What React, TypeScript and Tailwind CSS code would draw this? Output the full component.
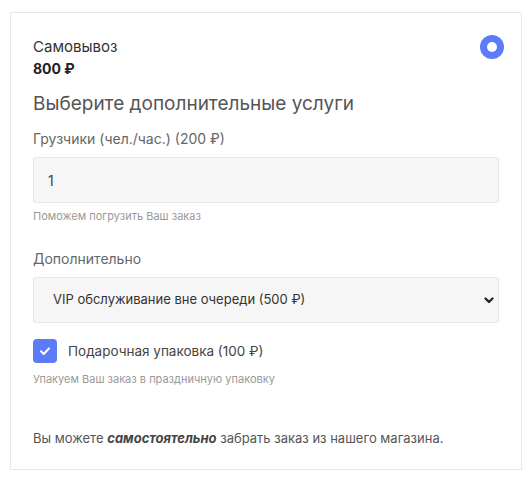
import React from "react";

const App = () => {
  return (
    <div className="min-h-screen bg-white pt-3 pl-[10px] font-['Inter',sans-serif] text-[#333]">
      <div className="w-[512px] border border-[#e8e8e8] px-[22px] pt-[24px] pb-[22px]">
        {/* Header */}
        <div className="flex justify-between items-start">
          <div>
            <div className="text-[15px] leading-[20px] text-[#333]">Самовывоз</div>
            <div className="text-[14px] leading-[20px] font-bold text-[#222] mt-[2px]">800 ₽</div>
          </div>
          <div className="w-6 h-6 rounded-full bg-[#5b7bf9] flex items-center justify-center mt-[-2px] mr-[-5px]">
            <div className="w-[10px] h-[10px] rounded-full bg-white" />
          </div>
        </div>

        <div className="text-[19px] leading-[26px] text-[#555] mt-[12px]">
          Выберите дополнительные услуги
        </div>

        {/* Loaders */}
        <div className="mt-[12px] text-[14px] leading-[20px] text-[#666]">Грузчики (чел./час.) (200 ₽)</div>
        <div className="mt-[8px] h-[46px] bg-[#f6f6f6] border border-[#e6e6e6] rounded-[2px] flex items-center px-[14px] text-[14px] text-[#444]">
          1
        </div>
        <div className="mt-[5px] text-[11px] leading-[16px] text-[#999]">Поможем погрузить Ваш заказ</div>

        {/* Additional */}
        <div className="mt-[25px] text-[14px] leading-[20px] text-[#666]">Дополнительно</div>
        <div className="mt-[8px] h-[46px] bg-[#f6f6f6] border border-[#e6e6e6] rounded-[2px] flex items-center justify-between pl-[19px] pr-[3px] text-[13px] text-[#333]">
          <span>VIP обслуживание вне очереди (500 ₽)</span>
          <svg width="12" height="12" viewBox="0 0 12 12">
            <path d="M2.5 4.5 L6 8 L9.5 4.5" fill="none" stroke="#222" strokeWidth="2.2" strokeLinecap="round" strokeLinejoin="round" />
          </svg>
        </div>

        {/* Gift wrapping */}
        <div className="mt-[16px] flex items-center gap-[11px]">
          <div className="w-6 h-6 rounded-[4px] bg-[#5b7bf9] flex items-center justify-center">
            <svg width="14" height="14" viewBox="0 0 14 14">
              <path d="M3 7.3 L5.8 10 L11 4.3" fill="none" stroke="#fff" strokeWidth="2" strokeLinecap="round" strokeLinejoin="round" />
            </svg>
          </div>
          <span className="text-[13.5px] leading-[20px] text-[#444]">Подарочная упаковка (100 ₽)</span>
        </div>
        <div className="mt-[8px] text-[11px] leading-[16px] text-[#999]">Упакуем Ваш заказ в праздничную упаковку</div>

        <p className="mt-[42px] text-[13px] leading-[18px] text-[#555]">
          Вы можете <b className="italic font-bold text-[#444]">самостоятельно</b> забрать заказ из нашего магазина.
        </p>
      </div>
    </div>
  );
};

export default App;
